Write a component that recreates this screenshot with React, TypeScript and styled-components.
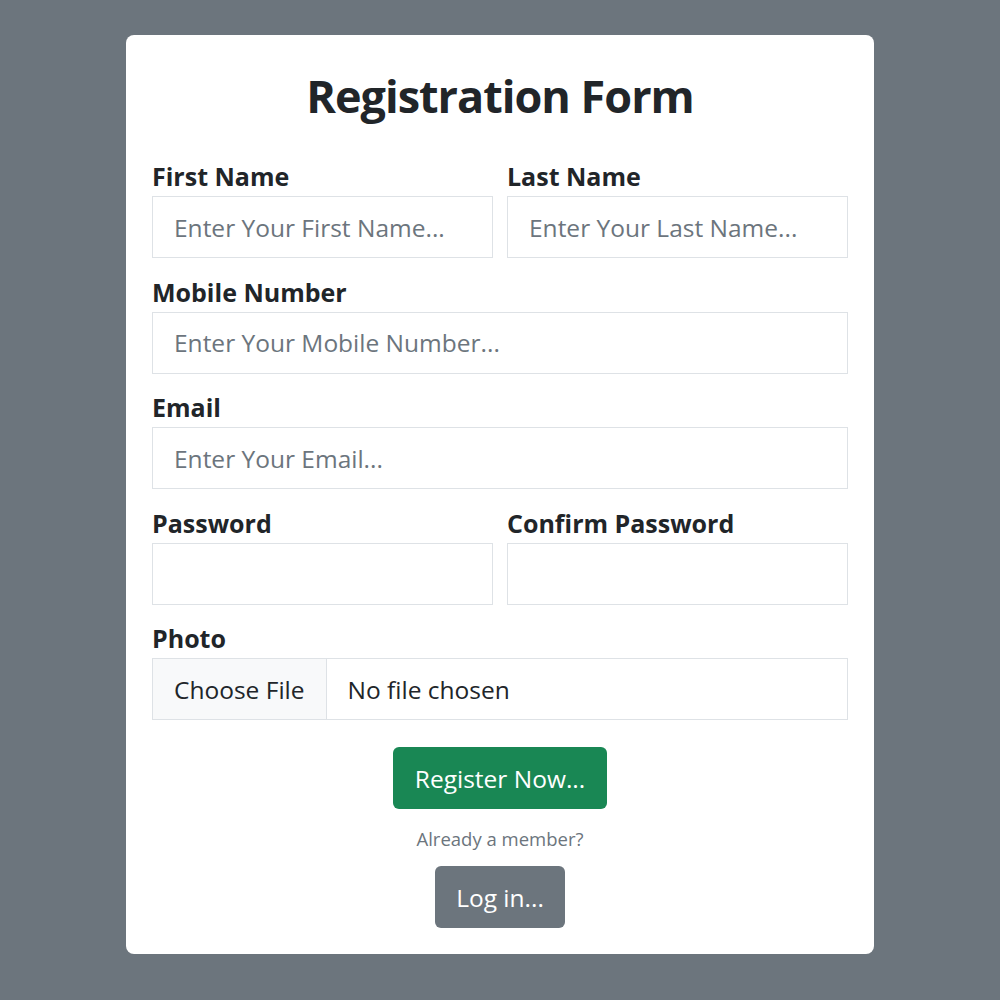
import React from "react";
import styled, { createGlobalStyle } from "styled-components";

const Global = createGlobalStyle`
  html, body { margin: 0; padding: 0; background: #6c757d; }
  body { font-family: "Segoe UI", "Open Sans", "Noto Sans", sans-serif; color: #212529; }
  * { box-sizing: border-box; }
`;

const Page = styled.div`
  min-height: 1000px;
  display: flex;
  justify-content: center;
  align-items: flex-start;
  padding-top: 35px;
`;

const Card = styled.form`
  width: 748px;
  background: #fff;
  border-radius: 8px;
  padding: 26px;
  display: flex;
  flex-direction: column;
`;

const Title = styled.h1`
  margin: 7.5px 0 36.5px;
  text-align: center;
  font-size: 45px;
  font-weight: 700;
  letter-spacing: -1px;
  line-height: 54px;
  color: #212529;
`;

const Row = styled.div`
  display: grid;
  grid-template-columns: 1fr 1fr;
  column-gap: 14px;
`;

const Field = styled.div`
  display: flex;
  flex-direction: column;
  margin-bottom: 16.5px;
`;

const Label = styled.label`
  font-size: 25px;
  font-weight: 700;
  line-height: 34px;
  margin-bottom: 3px;
`;

const Input = styled.input`
  height: 62px;
  border: 1.5px solid #dee2e6;
  border-radius: 0;
  padding: 0 21px;
  font-family: inherit;
  font-size: 24.5px;
  color: #212529;
  outline: none;
  width: 100%;
  &::placeholder { color: #6c757d; }
`;

const FileBox = styled.label`
  height: 62px;
  display: flex;
  border: 1.5px solid #dee2e6;
  font-size: 24.5px;
  cursor: pointer;
  input { display: none; }
`;

const FileButton = styled.span`
  background: #f8f9fa;
  border-right: 1.5px solid #dee2e6;
  padding: 0 21px;
  display: flex;
  align-items: center;
  color: #212529;
`;

const FileName = styled.span`
  padding: 0 21px;
  display: flex;
  align-items: center;
  color: #212529;
`;

const Actions = styled.div`
  display: flex;
  flex-direction: column;
  align-items: center;
  margin-top: 10.5px;
`;

const Button = styled.button<{ $variant: "success" | "secondary" }>`
  height: 62px;
  padding: 0 21.5px;
  border: none;
  border-radius: 6px;
  font-family: inherit;
  font-size: 24.5px;
  color: #fff;
  background: ${(p) => (p.$variant === "success" ? "#198754" : "#6c757d")};
  cursor: pointer;
`;

const Note = styled.p`
  margin: 17px 0 14px;
  font-size: 18.5px;
  color: #6c757d;
  line-height: 26px;
`;

export default function App() {
  return (
    <>
      <Global />
      <Page>
        <Card onSubmit={(e) => e.preventDefault()}>
          <Title>Registration Form</Title>
          <Row>
            <Field>
              <Label>First Name</Label>
              <Input placeholder="Enter Your First Name..." />
            </Field>
            <Field>
              <Label>Last Name</Label>
              <Input placeholder="Enter Your Last Name..." />
            </Field>
          </Row>
          <Field>
            <Label>Mobile Number</Label>
            <Input placeholder="Enter Your Mobile Number..." />
          </Field>
          <Field>
            <Label>Email</Label>
            <Input placeholder="Enter Your Email..." />
          </Field>
          <Row>
            <Field>
              <Label>Password</Label>
              <Input type="password" />
            </Field>
            <Field>
              <Label>Confirm Password</Label>
              <Input type="password" />
            </Field>
          </Row>
          <Field>
            <Label>Photo</Label>
            <FileBox>
              <input type="file" />
              <FileButton>Choose File</FileButton>
              <FileName>No file chosen</FileName>
            </FileBox>
          </Field>
          <Actions>
            <Button type="submit" $variant="success">Register Now...</Button>
            <Note>Already a member?</Note>
            <Button type="button" $variant="secondary">Log in...</Button>
          </Actions>
        </Card>
      </Page>
    </>
  );
}
